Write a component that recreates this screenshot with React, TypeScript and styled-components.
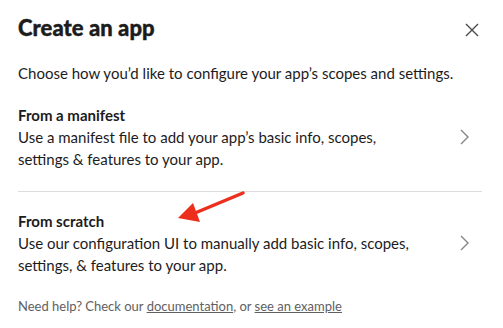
import React from "react";
import styled, { createGlobalStyle } from "styled-components";

const GlobalStyle = createGlobalStyle`
  html, body {
    margin: 0;
    padding: 0;
    background: #ffffff;
  }
  body {
    font-family: Lato, "Noto Sans", sans-serif;
    color: #1d1c1d;
    -webkit-font-smoothing: antialiased;
  }
`;

const Modal = styled.div`
  position: relative;
  width: 503px;
  height: 328px;
  box-sizing: border-box;
  padding: 12px 21px 0 18px;
  background: #fff;
  overflow: hidden;
`;

const Header = styled.div`
  display: flex;
  align-items: center;
  justify-content: space-between;
  height: 32px;
`;

const Title = styled.h1`
  margin: 0;
  font-size: 22px;
  line-height: 32px;
  font-weight: 900;
  -webkit-text-stroke: 0.4px currentColor;
  letter-spacing: 0.05px;
`;

const CloseButton = styled.button`
  display: flex;
  align-items: center;
  justify-content: center;
  width: 24px;
  height: 24px;
  margin: 3px -2px 0 0;
  padding: 0;
  border: none;
  background: transparent;
  color: #4a4a4a;
  cursor: pointer;
`;

const Intro = styled.p`
  margin: 18px 0 0;
  font-size: 15px;
  line-height: 22px;
`;

const Option = styled.div<{ $divider?: boolean }>`
  display: flex;
  align-items: center;
  padding: ${(p) => (p.$divider ? "20px 0 21px" : "18px 0 21px")};
  border-bottom: ${(p) => (p.$divider ? "1px solid #dddddd" : "none")};
  cursor: pointer;
`;

const OptionText = styled.div`
  flex: 1;
  max-width: 412px;
`;

const OptionTitle = styled.div`
  font-size: 15px;
  line-height: 22px;
  font-weight: 700;
`;

const OptionDesc = styled.div`
  font-size: 15px;
  line-height: 22px;
`;

const Chevron = styled.div`
  margin-left: auto;
  margin-right: 12px;
  color: #868686;
  display: flex;
`;

const Footer = styled.p`
  margin: 0;
  font-size: 13px;
  line-height: 18px;
  color: #616061;

  a {
    color: #616061;
    text-decoration: underline;
  }
`;

const Arrow = styled.svg`
  position: absolute;
  left: 170px;
  top: 188px;
`;

function ChevronIcon() {
  return (
    <svg width="10" height="16" viewBox="0 0 10 16" fill="none">
      <path d="M1 1 L8 8 L1 15" stroke="currentColor" strokeWidth="1.4" />
    </svg>
  );
}

export default function App() {
  return (
    <>
      <GlobalStyle />
      <Modal>
        <Header>
          <Title>Create an app</Title>
          <CloseButton aria-label="Close">
            <svg width="14" height="14" viewBox="0 0 14 14" fill="none">
              <path d="M1 1 L13 13 M13 1 L1 13" stroke="currentColor" strokeWidth="1.4" />
            </svg>
          </CloseButton>
        </Header>
        <Intro>Choose how you’d like to configure your app’s scopes and settings.</Intro>

        <Option $divider>
          <OptionText>
            <OptionTitle>From a manifest</OptionTitle>
            <OptionDesc>
              Use a manifest file to add your app’s basic info, scopes, settings &amp; features to
              your app.
            </OptionDesc>
          </OptionText>
          <Chevron>
            <ChevronIcon />
          </Chevron>
        </Option>

        <Option>
          <OptionText>
            <OptionTitle>From scratch</OptionTitle>
            <OptionDesc>
              Use our configuration UI to manually add basic info, scopes, settings, &amp; features
              to your app.
            </OptionDesc>
          </OptionText>
          <Chevron>
            <ChevronIcon />
          </Chevron>
        </Option>

        <Footer>
          Need help? Check our <a href="#">documentation</a>, or <a href="#">see an example</a>
        </Footer>

        <Arrow width="80" height="40" viewBox="0 0 80 40">
          <path d="M73 5 L25 25" stroke="#ee2e1c" strokeWidth="3.4" strokeLinecap="round" />
          <path d="M8 30 L23 15 L30 34 Z" fill="#ee2e1c" />
        </Arrow>
      </Modal>
    </>
  );
}
